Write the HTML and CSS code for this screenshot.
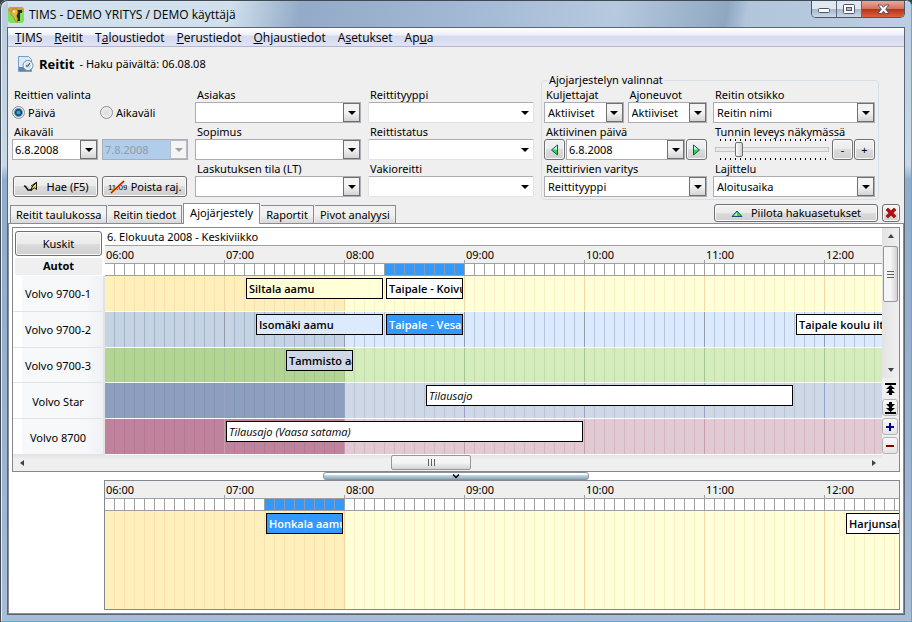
FILE: index.html
```html
<!DOCTYPE html>
<html lang="fi">
<head>
  <meta charset="UTF-8">
  <meta name="viewport" content="width=device-width, initial-scale=1">
  <title>TIMS - DEMO YRITYS / DEMO käyttäjä</title>
  <link rel="stylesheet" href="styles.css">
</head>
<body>
<div class="window">

  <!-- === Title bar === -->
  <header class="titlebar">
    <svg class="app-icon" width="16" height="16" viewBox="0 0 16 16">
      <rect width="16" height="16" rx="3" fill="#7fe05a"/>
      <path d="M0 3Q0 0 3 0h10q3 0 3 3v2H0z" fill="#c9a04a"/>
      <path d="M6 3h8v3h-2v8H9V6H6z" fill="#17331a"/>
      <path d="M3 5l2-3 4 0 1 3-1 3-1 1 2 3-1 1 1 2-2 0-3-6-2-1z" fill="#f0b040" stroke="#a86a15" stroke-width=".6"/>
      <circle cx="6" cy="4.500" r="1" fill="#fff"/>
    </svg>
    <span class="caption">TIMS - DEMO YRITYS / DEMO käyttäjä</span>
    <div class="win-buttons">
      <button class="win-min" aria-label="Pienennä"><svg width="13" height="13" viewBox="0 0 13 13"><rect x=".5" y="5.500" width="11" height="4" rx="1" fill="#fff" stroke="#535666"/></svg></button>
      <button class="win-max" aria-label="Suurenna"><svg width="13" height="13" viewBox="0 0 13 13"><rect x=".5" y="1.500" width="11" height="9" rx="1" fill="#fff" stroke="#535666"/><rect x="3.500" y="4.500" width="5" height="3" fill="#a8bbd0" stroke="#535666"/></svg></button>
      <button class="win-close" aria-label="Sulje"><svg width="13" height="13" viewBox="0 0 13 13"><path d="M1 2h3.500l2 2.300 2-2.300H12L8.700 6.200 12 10.500H8.500l-2-2.300-2 2.300H1l3.300-4.300z" fill="#fff" stroke="#535666"/></svg></button>
    </div>
  </header>

  <div class="client">
    <nav class="menubar">
      <a href="#"><u>T</u>IMS</a>
      <a href="#"><u>R</u>eitit</a>
      <a href="#">T<u>a</u>loustiedot</a>
      <a href="#"><u>P</u>erustiedot</a>
      <a href="#"><u>O</u>hjaustiedot</a>
      <a href="#">A<u>s</u>etukset</a>
      <a href="#">Ap<u>u</u>a</a>
    </nav>

    <div class="heading">
      <svg width="16" height="16" viewBox="0 0 16 16">
        <path d="M.5.5h10l3 3v12H.5z" fill="#dce9f7" stroke="#6f9fd0"/>
        <path d="M1 11h12v4H1z" fill="#6585ad"/>
        <circle cx="10" cy="9.500" r="5" fill="#f2f6fa" stroke="#70879c"/>
        <circle cx="10" cy="9.500" r="3" fill="#c9dcec"/>
        <path d="M10 10l2-3M10 10H8" stroke="#243c55" fill="none"/>
      </svg>
      <h1>Reitit</h1>
      <span>- Haku päivältä: 06.08.08</span>
    </div>

    <!-- === Search settings === -->
    <form class="search">
      <div class="col">
        <span class="label">Reittien valinta</span>
        <div class="radios">
          <label><input type="radio" name="span" checked>Päivä</label>
          <label><input type="radio" name="span">Aikaväli</label>
        </div>
        <label class="label" for="date-from">Aikaväli</label>
        <div class="pair">
          <div class="combo"><input type="text" id="date-from" value="6.8.2008"><span class="arrow"></span></div>
          <div class="combo disabled"><input type="text" value="7.8.2008" aria-label="Loppupäivä" disabled><span class="arrow"></span></div>
        </div>
        <div class="pair actions">
          <button type="button" class="btn">
            <svg width="16" height="14" viewBox="0 0 16 14"><path d="M1 6l1.500.5L5 10h3l4-4.500" fill="none" stroke="#111" stroke-width="1.500"/><path d="M13.500 2.500v7l-2.300-1.800L8 10.500 9 7z" fill="#f5e523" stroke="#111"/><path d="M8 6l6-4" stroke="#111"/></svg>
            Hae (F5)
          </button>
          <button type="button" class="btn clear">
            <svg width="19" height="14" viewBox="0 0 19 14"><text class="date-glyph" x="0" y="10">11.09</text><path d="M3 13L16 1" stroke="#f2c300" stroke-width="2"/><path d="M3 13L16 1" stroke="#d80000" stroke-width="1.200"/></svg>
            Poista raj.
          </button>
        </div>
      </div>

      <div class="col">
        <label class="label" for="customer">Asiakas</label>
        <div class="combo"><select id="customer"><option></option></select><span class="arrow"></span></div>
        <label class="label" for="contract">Sopimus</label>
        <div class="combo"><select id="contract"><option></option></select><span class="arrow"></span></div>
        <label class="label" for="billing">Laskutuksen tila (LT)</label>
        <div class="combo"><select id="billing"><option></option></select><span class="arrow"></span></div>
      </div>

      <div class="col">
        <label class="label" for="type">Reittityyppi</label>
        <div class="combo flat"><select id="type"><option></option></select><span class="arrow"></span></div>
        <label class="label" for="status">Reittistatus</label>
        <div class="combo flat"><select id="status"><option></option></select><span class="arrow"></span></div>
        <label class="label" for="regular">Vakioreitti</label>
        <div class="combo flat"><select id="regular"><option></option></select><span class="arrow"></span></div>
      </div>

      <fieldset>
        <legend>Ajojarjestelyn valinnat</legend>
        <div class="options">
          <div class="group">
            <div class="pair">
              <div>
                <label class="label" for="drivers">Kuljettajat</label>
                <div class="combo"><select id="drivers"><option>Aktiiviset</option></select><span class="arrow"></span></div>
              </div>
              <div>
                <label class="label" for="vehicles">Ajoneuvot</label>
                <div class="combo"><select id="vehicles"><option>Aktiiviset</option></select><span class="arrow"></span></div>
              </div>
            </div>
            <label class="label" for="active-day">Aktiivinen päivä</label>
            <div class="stepper">
              <button type="button" class="btn square" aria-label="Edellinen päivä"><svg width="9" height="12" viewBox="0 0 9 12"><path d="M7.500 1v10L1.500 6z" fill="#2be02b" stroke="#14507e"/><path d="M7 2L3 5.500h4z" fill="#d5f5e5"/></svg></button>
              <div class="combo"><input type="text" id="active-day" value="6.8.2008"><span class="arrow"></span></div>
              <button type="button" class="btn square" aria-label="Seuraava päivä"><svg width="9" height="12" viewBox="0 0 9 12"><path d="M1.500 1v10l6-5z" fill="#2be02b" stroke="#14507e"/><path d="M2 2l4 3.500H2z" fill="#d5f5e5"/></svg></button>
            </div>
            <label class="label" for="coloring">Reittirivien varitys</label>
            <div class="combo"><select id="coloring"><option>Reittityyppi</option></select><span class="arrow"></span></div>
          </div>
          <div class="group">
            <label class="label" for="route-title">Reitin otsikko</label>
            <div class="combo"><select id="route-title"><option>Reitin nimi</option></select><span class="arrow"></span></div>
            <label class="label" for="hour-width">Tunnin leveys näkymässä</label>
            <div class="stepper">
              <div class="slider"><input type="range" id="hour-width" min="1" max="23" value="5"></div>
              <button type="button" class="btn square">-</button>
              <button type="button" class="btn square">+</button>
            </div>
            <label class="label" for="sorting">Lajittelu</label>
            <div class="combo"><select id="sorting"><option>Aloitusaika</option></select><span class="arrow"></span></div>
          </div>
        </div>
      </fieldset>
    </form>

    <!-- === Tabs === -->
    <div class="tabstrip">
      <button class="tab">Reitit taulukossa</button>
      <button class="tab">Reitin tiedot</button>
      <button class="tab active">Ajojärjestely</button>
      <button class="tab">Raportit</button>
      <button class="tab">Pivot analyysi</button>
      <button class="btn hide-search">
        <svg width="12" height="7" viewBox="0 0 12 7"><path d="M1 6.500h10L6 1z" fill="#2be02b" stroke="#14507e"/><path d="M3 5.500h3V2.500z" fill="#d5f5e5"/></svg>
        Piilota hakuasetukset
      </button>
      <button class="btn close-view" aria-label="Sulje näkymä"><svg width="12" height="12" viewBox="0 0 12 12"><path d="M1 3l2-2 3 2.800L9 1l2 2-2.800 3L11 9l-2 2-3-2.800L3 11 1 9l2.800-3z" fill="#b50d0d" stroke="#8b0000" stroke-width=".6"/></svg></button>
    </div>

    <main class="tabpage">
      <section class="schedule">
        <div class="vehicles">
          <div class="corner">
            <button class="btn">Kuskit</button>
            <strong>Autot</strong>
          </div>
          <ul class="rows">
            <li>Volvo 9700-1</li>
            <li>Volvo 9700-2</li>
            <li>Volvo 9700-3</li>
            <li>Volvo Star</li>
            <li>Volvo 8700</li>
          </ul>
        </div>

        <div class="timeline">
          <div class="day">6. Elokuuta 2008 - Keskiviikko</div>
          <div class="hours"><span>06:00</span><span>07:00</span><span>08:00</span><span>09:00</span><span>10:00</span><span>11:00</span><span>12:00</span></div>
          <div class="cells"><span class="busy" style="left:280px;width:79px"></span></div>
          <div class="rows">
            <div class="lane yellow">
              <div class="trip yellow" style="left:141px;width:137px">Siltala aamu</div>
              <div class="trip" style="left:281px;width:77px">Taipale - Koivu</div>
            </div>
            <div class="lane blue">
              <div class="trip blue" style="left:151px;width:127px">Isomäki aamu</div>
              <div class="trip selected" style="left:281px;width:77px">Taipale - Vesa</div>
              <div class="trip" style="left:691px;width:137px">Taipale koulu ilta</div>
            </div>
            <div class="lane green">
              <div class="trip navy" style="left:181px;width:67px">Tammisto aamu</div>
            </div>
            <div class="lane navy">
              <div class="trip order" style="left:321px;width:367px">Tilausajo</div>
            </div>
            <div class="lane rose">
              <div class="trip order" style="left:121px;width:357px">Tilausajo (Vaasa satama)</div>
            </div>
          </div>
        </div>

        <div class="side">
          <div class="vscroll">
            <button class="up" aria-label="Ylös"></button>
            <div class="thumb"></div>
            <button class="down" aria-label="Alas"></button>
          </div>
          <button class="tool plain" aria-label="Ensimmäinen"><svg width="11" height="12" viewBox="0 0 11 12"><path d="M0 0h11v2H0zM5.500 2l4.500 4H7v1l3 3H7v2H4v-2H1l3-3V6H1z"/></svg></button>
          <button class="tool" aria-label="Viimeinen"><svg width="11" height="12" viewBox="0 0 11 12"><path d="M0 10h11v2H0zM5.500 10L10 6H7V5l3-3H7V0H4v2H1l3 3v1H1z"/></svg></button>
          <button class="tool" aria-label="Lisää"><svg width="8" height="8" viewBox="0 0 8 8"><path d="M0 4h8M4 0v8" stroke="#000080" stroke-width="2"/></svg></button>
          <button class="tool" aria-label="Poista"><svg width="8" height="8" viewBox="0 0 8 8"><path d="M0 4h8" stroke="#800000" stroke-width="2"/></svg></button>
        </div>

        <div class="hscroll">
          <button class="left" aria-label="Vasemmalle"></button>
          <div class="thumb"></div>
          <button class="right" aria-label="Oikealle"></button>
        </div>
      </section>

      <div class="splitter"><button aria-label="Piilota alaosa"><svg width="8" height="5" viewBox="0 0 8 5"><path d="M1 .5l3 3 3-3" fill="none" stroke="#000" stroke-width="1.500"/></svg></button></div>

      <!-- Trips that have no vehicle yet -->
      <section class="unassigned timeline">
        <div class="hours"><span>06:00</span><span>07:00</span><span>08:00</span><span>09:00</span><span>10:00</span><span>11:00</span><span>12:00</span></div>
        <div class="cells"><span class="busy" style="left:160px;width:79px"></span></div>
        <div class="lane yellow">
          <div class="trip selected" style="left:161px;width:77px">Honkala aamu</div>
          <div class="trip" style="left:741px;width:97px">Harjunsalmi</div>
        </div>
      </section>
    </main>
  </div>
</div>
</body>
</html>
```
FILE: styles.css
```css
* {
  box-sizing: border-box;
}

body {
  margin: 0;
  background: #3a3f45;
  color: #000;
  font-family: "Noto Sans", "Open Sans", sans-serif;
  font-size: 11px;
  line-height: 16px;
}

button, input, select {
  font: inherit;
  color: inherit;
  margin: 0;
  padding: 0;
}

button {
  display: flex;
  align-items: center;
  justify-content: center;
}

svg {
  flex: none;
}

/* === Window frame === */
.window {
  display: flex;
  flex-direction: column;
  min-height: 100vh;
  padding: 0 8px 8px;
  border-radius: 7px 7px 0 0;
  background: linear-gradient(#b9cce0 0, #c8d8e8 165px, #8faccb 180px, #9ab3d0 450px, #a8bdd6 100%);
  box-shadow: inset 1px 1px #3f4a55, inset -1px -1px #1fc4ee, inset 2px 2px #e3edf7;
}

.titlebar {
  display: flex;
  align-items: center;
  height: 27px;
  margin: 1px -1px 0 0;
  background: linear-gradient(100deg, rgba(214, 228, 240, .9) 0, rgba(214, 228, 240, .8) 220px, #93abc8 290px, #a2b8d4 450px, #b6c9e0 600px, #8fa8c2 710px, #b1c5db 730px, #bccfe2 100%);
}

.caption {
  flex: 1;
  padding-left: 5px;
  font-family: "Open Sans", sans-serif;
  font-size: 12px;
}

.win-buttons {
  display: flex;
  align-self: flex-start;
  border: 1px solid #4d5664;
  border-top: 0;
  border-radius: 0 0 5px 5px;
  overflow: hidden;
}

.win-buttons button {
  height: 16px;
  width: 25px;
  border: 0;
  border-right: 1px solid #5d6878;
  background: linear-gradient(#dfe8f1 0 50%, #a5b7ca 50%, #c9d9e8);
}

.win-buttons .win-close {
  width: 42px;
  border-right: 0;
  background: linear-gradient(#e9a99a 0, #d2715d 50%, #b52f18 50%, #d8643c);
}

.client {
  flex: 1;
  display: flex;
  flex-direction: column;
  background: #efefef;
  outline: 1px solid #5a6675;
}

/* === Menu === */
.menubar {
  display: flex;
  gap: 12px;
  height: 19px;
  padding: 0 7px;
  border-bottom: 1px solid #b3b6ce;
  background: linear-gradient(#fff 0, #eef0f8 7px, #d5daed 8px, #dfe3f3);
  font-family: "Open Sans", sans-serif;
  font-size: 12px;
  line-height: 19px;
}

.menubar a {
  color: #000;
  text-decoration: none;
}

.heading {
  display: flex;
  align-items: center;
  gap: 5px;
  height: 27px;
  padding: 6px 10px 0;
}

.heading h1 {
  margin: 0;
  font-family: "Open Sans", sans-serif;
  font-size: 13px;
}

/* === Search settings === */
.search {
  display: grid;
  grid-template-columns: 176px 1fr 1fr 338px;
  gap: 7px;
  height: 129px;
  padding: 0 25px 0 4px;
}

.col {
  padding-top: 12px;
}

.label {
  display: block;
  height: 16px;
  padding-left: 2px;
  line-height: 18px;
  white-space: nowrap;
}

.radios {
  display: grid;
  grid-template-columns: 1fr 1fr;
  height: 21px;
}

.radios label {
  display: flex;
  align-items: center;
  gap: 3px;
}

.radios input {
  appearance: none;
  width: 13px;
  height: 13px;
  border: 1px solid #8e8f8f;
  border-radius: 50%;
  background: radial-gradient(#dcdcdc, #f6f6f6);
}

.radios input:checked {
  background: radial-gradient(#36a8dd 0 1px, #0b3f66 3px, #e4f0f6 5px);
}

.pair {
  display: grid;
  grid-template-columns: repeat(2, minmax(0, 1fr));
  gap: 4px;
}

.actions {
  padding: 16px 1px 0;
}

.combo {
  display: flex;
  height: 21px;
  border: 1px solid #abadb3;
  background: #fff;
}

.combo input, .combo select {
  flex: 1;
  width: 0;
  min-width: 0;
  padding-left: 2px;
  border: 0;
  outline: 0;
  background: transparent;
  appearance: none;
}

.combo select {
  padding-left: 3px;
}

.arrow {
  display: flex;
  flex: none;
  align-items: center;
  justify-content: center;
  width: 17px;
  border: 1px solid #707070;
  background: linear-gradient(#f3f3f3 50%, #d4d4d4);
}

.arrow::after {
  content: "";
  border: 4px solid transparent;
  border-top-color: #000;
  border-bottom: 0;
}

.combo.disabled {
  background: #b0cdec;
  color: #919ba6;
}

.disabled .arrow {
  border-color: #b5bcc4;
  background: #f4f4f4;
}

.disabled .arrow::after {
  border-top-color: #a0a0a0;
}

.combo.flat {
  border-color: #abadb3 #e2e3ea #e2e3ea;
  border-radius: 2px;
}

.flat .arrow {
  border: 0;
  background: none;
}

.btn {
  height: 21px;
  gap: 8px;
  border: 1px solid #707070;
  border-radius: 3px;
  background: linear-gradient(#f2f2f2 0, #ebebeb 50%, #dcdcdc 50%, #cfcfcf);
  box-shadow: inset 0 0 0 1px #fafafa;
  white-space: nowrap;
}

.btn.clear {
  gap: 4px;
}

.date-glyph {
  font: 8px "Liberation Sans", sans-serif;
}

.square {
  flex: none;
  width: 21px;
}

fieldset {
  min-width: 0;
  height: 126px;
  margin: 0;
  padding: 0 3px 0 2px;
  border: 1px solid #d5dfe5;
  border-radius: 4px;
}

legend {
  height: 12px;
  margin-left: 4px;
  padding: 0 1px;
  line-height: 12px;
}

.options {
  display: grid;
  grid-template-columns: 163px minmax(0, 1fr);
  gap: 6px;
}

.stepper {
  display: flex;
  gap: 1px;
}

.stepper .combo, .slider {
  flex: 1;
  min-width: 0;
}

/* tick marks above and below the track */
.slider {
  display: flex;
  align-items: center;
  padding: 0 2px;
  background:
    repeating-linear-gradient(90deg, #000 0 1px, transparent 1px 5px) 7px 0 / 110px 2px no-repeat,
    repeating-linear-gradient(90deg, #000 0 1px, transparent 1px 5px) 7px 100% / 110px 2px no-repeat;
}

.slider input {
  appearance: none;
  width: 100%;
  height: 5px;
  border: 1px solid #c3c7c7;
  background: #e7eaea;
}

.slider input::-webkit-slider-thumb {
  appearance: none;
  width: 8px;
  height: 15px;
  border: 1px solid #6d6d6d;
  border-radius: 2px;
  background: linear-gradient(90deg, #fdfdfd, #d0d0d0);
}

/* === Tabs === */
.tabstrip {
  display: flex;
  align-items: flex-end;
  gap: 1px;
  height: 20px;
  padding: 0 4px 0 2px;
}

.tab {
  height: 18px;
  padding: 0 5px;
  border: 1px solid #898c95;
  border-bottom: 0;
  border-left-width: 0;
  background: linear-gradient(#f2f2f2 50%, #d8d8d8);
  white-space: nowrap;
}

.tab:first-child {
  border-left-width: 1px;
}

.tab.active {
  position: relative;
  height: 21px;
  margin-bottom: -1px;
  padding: 0 6px 2px;
  border-left-width: 1px;
  background: #fff;
}

.hide-search {
  align-self: center;
  width: 164px;
  height: 18px;
  margin-left: auto;
}

.close-view {
  align-self: center;
  width: 18px;
  height: 18px;
  margin-left: 3px;
}

.tabpage {
  flex: 1;
  display: flex;
  flex-direction: column;
  padding: 3px;
  border: 1px solid #898c95;
  background: #fff;
}

/* === Schedule === */
.schedule {
  display: grid;
  grid-template-columns: 92px minmax(0, 1fr) 17px;
  border: 1px solid #828790;
}

.corner {
  display: flex;
  flex-direction: column;
  gap: 2px;
  height: 48px;
  padding: 3px 3px 0 2px;
}

.corner .btn {
  height: 25px;
}

.corner strong {
  height: 17px;
  background: #efefef;
  text-align: center;
}

.rows {
  display: grid;
  grid-template-rows: repeat(5, 1fr);
  height: 179px;
  margin: 0;
  padding: 0;
  list-style: none;
}

.rows li {
  display: flex;
  align-items: center;
  justify-content: center;
  padding-top: 2px;
  border-right: 2px solid #e3e3e3;
  border-bottom: 1px solid #e3e3e3;
  background: linear-gradient(90deg, #fff 9px, #f6f8fa 9px 80%, #eff1f5);
}

.timeline {
  min-width: 0;
  overflow: hidden;
}

.day {
  height: 18px;
  padding-left: 2px;
  border-bottom: 1px solid #a0a0a0;
  line-height: 18px;
}

.hours {
  display: flex;
  height: 18px;
  overflow: hidden;
  border-bottom: 1px solid #a0a0a0;
  background: #efefef;
  line-height: 18px;
}

.hours span {
  flex: none;
  width: 120px;
  padding-left: 1px;
  background: linear-gradient(#a0a0a0, #a0a0a0) 100% 100% / 1px 3px no-repeat;
}

.cells {
  position: relative;
  height: 12px;
  border-bottom: 1px solid #a0a0a0;
  background: repeating-linear-gradient(90deg, #fff 0 9px, #a0a0a0 9px 10px);
}

.busy {
  position: absolute;
  top: 0;
  bottom: 0;
  background: repeating-linear-gradient(90deg, #39f 0 9px, #8a9bb0 9px 10px);
}

.lane {
  position: relative;
  overflow: hidden;
  border-bottom: 1px solid #fff;
  background:
    repeating-linear-gradient(90deg, transparent 0 119px, var(--hour) 119px 120px),
    repeating-linear-gradient(90deg, transparent 0 9px, var(--tick) 9px 10px),
    linear-gradient(90deg, var(--past) 240px, var(--light) 240px);
}

.yellow {
  --past: #fff0bb;
  --light: #ffffd8;
  --tick: rgba(225, 130, 70, .13);
  --hour: #f3d6a0;
}

.blue {
  --past: #c5d3e5;
  --light: #dceafe;
  --tick: rgba(80, 105, 125, .28);
  --hour: #929dab;
}

.green {
  --past: #b2d593;
  --light: #d5ecbc;
  --tick: rgba(60, 100, 50, .12);
  --hour: #a5c48f;
}

.navy {
  --past: #8d9ebf;
  --light: #ced8e7;
  --tick: rgba(60, 80, 110, .14);
  --hour: #97a4c8;
}

.rose {
  --past: #bf839e;
  --light: #e2cad5;
  --tick: rgba(140, 50, 80, .14);
  --hour: #c59ca8;
}

.trip {
  position: absolute;
  top: 2px;
  height: 21px;
  padding: 0 2px;
  overflow: hidden;
  border: 1px solid #000;
  background: #fff;
  font-family: "Open Sans", sans-serif;
  font-weight: 600;
  line-height: 20px;
  white-space: nowrap;
}

.trip.yellow, .trip.blue, .trip.navy {
  background: var(--light);
}

.trip.selected {
  background: #39f;
  color: #fff;
}

.trip.order {
  font-style: italic;
  font-weight: normal;
}

/* === Scroll bars === */
.side {
  grid-row: span 2;
  display: flex;
  flex-direction: column;
  gap: 2px;
  background: #efefef;
}

.vscroll {
  display: flex;
  flex-direction: column;
  height: 150px;
  background: linear-gradient(90deg, #e3e3e3, #f0f0f0);
}

.hscroll {
  grid-column: 1 / 3;
  display: flex;
  height: 16px;
  background: linear-gradient(#e3e3e3, #efefef 4px);
}

.vscroll button, .hscroll button {
  flex: none;
  width: 17px;
  height: 16px;
  border: 0;
  background: transparent;
}

.vscroll button::after, .hscroll button::after {
  content: "";
  border: 3px solid transparent;
}

.vscroll .up::after {
  border-bottom: 4px solid #404040;
  border-top: 0;
}

.vscroll .down {
  margin-top: auto;
}

.vscroll .down::after {
  border-top: 4px solid #404040;
  border-bottom: 0;
}

.hscroll .left::after {
  border-right: 4px solid #404040;
  border-left: 0;
}

.hscroll .right {
  margin-left: auto;
}

.hscroll .right::after {
  border-left: 4px solid #404040;
  border-right: 0;
}

.vscroll .thumb {
  width: 15px;
  height: 56px;
  margin: 2px 1px;
  border: 1px solid #979797;
  border-radius: 2px;
  background:
    repeating-linear-gradient(#606060 0 1px, transparent 1px 3px) center / 7px 7px no-repeat,
    linear-gradient(90deg, #f5f5f5 50%, #d3d3d8);
}

.hscroll .thumb {
  width: 80px;
  height: 15px;
  margin-left: 361px;
  border: 1px solid #979797;
  border-radius: 2px;
  background:
    repeating-linear-gradient(90deg, #606060 0 1px, transparent 1px 3px) center / 7px 7px no-repeat,
    linear-gradient(#f5f5f5 50%, #d3d3d8);
}

.tool {
  width: 16px;
  height: 17px;
  border: 1px solid #b5b5b5;
  border-radius: 3px;
  background: linear-gradient(#f8f8f8, #e4e4e4);
}

.tool.plain {
  border-color: transparent;
  background: transparent;
}

/* === Splitter === */
.splitter {
  display: flex;
  justify-content: center;
  height: 8px;
}

.splitter button {
  width: 30%;
  height: 8px;
  border: 1px solid #8a949c;
  border-radius: 3px;
  background: linear-gradient(#fff 30%, #bfdae6 40%, #8fa8b8);
}

.unassigned {
  flex: 1;
  display: flex;
  flex-direction: column;
  margin-left: 92px;
  border: 1px solid #828790;
}

.unassigned .lane {
  flex: 1;
  border-bottom: 0;
}
```
